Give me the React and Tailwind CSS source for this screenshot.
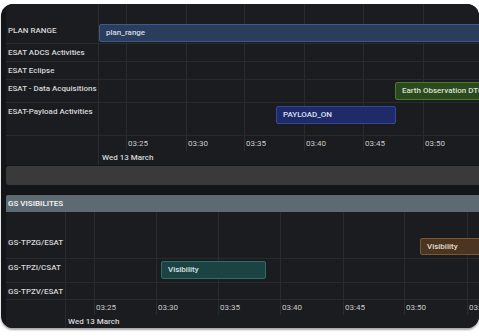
const planRows = [
  { label: "PLAN RANGE", cls: "h-[40px] pt-[18px]" },
  { label: "ESAT ADCS Activities", cls: "h-[18px]" },
  { label: "ESAT Eclipse", cls: "h-[18px]" },
  { label: "ESAT - Data Acquisitions", cls: "h-[23px]" },
  { label: "ESAT-Payload Activities", cls: "h-[33px]" },
];

const planBars = [
  { row: 0, text: "plan_range", cls: "left-0 w-[400px] top-[20px] h-[18px] bg-[#2b3d5d] border-[#3e5b88] text-[#d3dae6]" },
  { row: 3, text: "Earth Observation DTO", cls: "left-[296px] w-[120px] top-[2px] h-[18px] bg-[#2b481e] border-[#4a7a2b] text-[#d9e2cf]" },
  { row: 4, text: "PAYLOAD_ON", cls: "left-[177px] w-[120px] top-[3px] h-[18px] bg-[#1f2a69] border-[#33479a] text-[#dde1f0]" },
];

const planTicks = [
  { t: "03:25", line: "left-[27px]", label: "left-[29px]" },
  { t: "03:30", line: "left-[87px]", label: "left-[89px]" },
  { t: "03:35", line: "left-[145px]", label: "left-[147px]" },
  { t: "03:40", line: "left-[205px]", label: "left-[207px]" },
  { t: "03:45", line: "left-[264px]", label: "left-[266px]" },
  { t: "03:50", line: "left-[324px]", label: "left-[326px]" },
];

const gsRows = [
  { label: "GS-TPZG/ESAT", cls: "h-[47px] pt-[22px]" },
  { label: "GS-TPZI/CSAT", cls: "h-[24px]" },
  { label: "GS-TPZV/ESAT", cls: "h-[17px]" },
];

const gsBars = [
  { row: 0, text: "Visibility", cls: "left-[354px] w-[80px] top-[26px] h-[17px] bg-[#4b3520] border-[#7b5733] text-[#e6dccf]" },
  { row: 1, text: "Visibility", cls: "left-[95px] w-[105px] top-[2px] h-[18px] bg-[#1c4343] border-[#2e6c67] text-[#d6e4e2]" },
];

const gsTicks = [
  { t: "03:25", line: "left-[28px]", label: "left-[30px]" },
  { t: "03:30", line: "left-[90px]", label: "left-[92px]" },
  { t: "03:35", line: "left-[152px]", label: "left-[154px]" },
  { t: "03:40", line: "left-[214px]", label: "left-[216px]" },
  { t: "03:45", line: "left-[277px]", label: "left-[279px]" },
  { t: "03:50", line: "left-[338px]", label: "left-[340px]" },
  { t: "03:55", line: "left-[401px]", label: "left-[403px]" },
];

function Timeline({ rows, bars, ticks, labelCls, gridCls, datePl }) {
  return (
    <div className="flex bg-[#1b1c1f]">
      <div className={`flex flex-col border-r border-[#2a2b2f] ${labelCls}`}>
        {rows.map((r) => (
          <div
            key={r.label}
            className={`border-b border-[#2a2b2f] pl-[2px] text-[8px] font-medium leading-[18px] text-[#d6d7d9] whitespace-nowrap ${r.cls}`}
          >
            {r.label}
          </div>
        ))}
        <div className="h-[15px]" />
        <div className="h-[14px]" />
      </div>
      <div className="relative flex flex-1 flex-col overflow-hidden">
        <div className={`absolute left-0 top-0 w-full ${gridCls}`}>
          {ticks.map((k) => (
            <div key={k.t} className={`absolute top-0 h-full w-px bg-[#2a2b2f] ${k.line}`} />
          ))}
        </div>
        {rows.map((r, i) => (
          <div key={r.label} className={`relative border-b border-[#2a2b2f] ${r.cls}`}>
            {bars
              .filter((b) => b.row === i)
              .map((b) => (
                <div
                  key={b.text}
                  className={`absolute flex items-center overflow-hidden whitespace-nowrap rounded-[2px] border pl-[6px] text-[8px] font-medium ${b.cls}`}
                >
                  {b.text}
                </div>
              ))}
          </div>
        ))}
        <div className="relative h-[15px]">
          {ticks.map((k) => (
            <span key={k.t} className={`absolute top-0 text-[8px] leading-[15px] text-[#c9cacc] ${k.label}`}>
              {k.t}
            </span>
          ))}
        </div>
        <div className={`h-[14px] whitespace-nowrap text-[8px] font-medium leading-[14px] text-[#d6d7d9] ${datePl}`}>
          Wed 13 March
        </div>
      </div>
    </div>
  );
}

export default function App() {
  return (
    <div className="h-[336px] w-[479px] overflow-hidden bg-white pl-[1px] pt-[4px] font-['Roboto','Liberation_Sans',sans-serif]">
      <div className="h-[324px] w-[478px] overflow-hidden rounded-[12px] bg-[#131518] pl-[5px] shadow-[0_2px_2px_rgba(0,0,0,0.35)]">
        <Timeline
          rows={planRows}
          bars={planBars}
          ticks={planTicks}
          labelCls="w-[93px]"
          gridCls="h-[147px]"
          datePl="pl-[3px]"
        />
        <div className="mt-[1px] h-[19px] rounded-l-[3px] bg-[#3a3a3b]" />
        <div className="mt-[10px] flex h-[17px] items-center rounded-tl-[2px] bg-[#5e6a72] pl-[2px] text-[8px] font-semibold text-[#eef1f2]">
          GS VISIBILITES
        </div>
        <Timeline
          rows={gsRows}
          bars={gsBars}
          ticks={gsTicks}
          labelCls="w-[60px]"
          gridCls="h-[103px]"
          datePl="pl-[2px]"
        />
      </div>
    </div>
  );
}
